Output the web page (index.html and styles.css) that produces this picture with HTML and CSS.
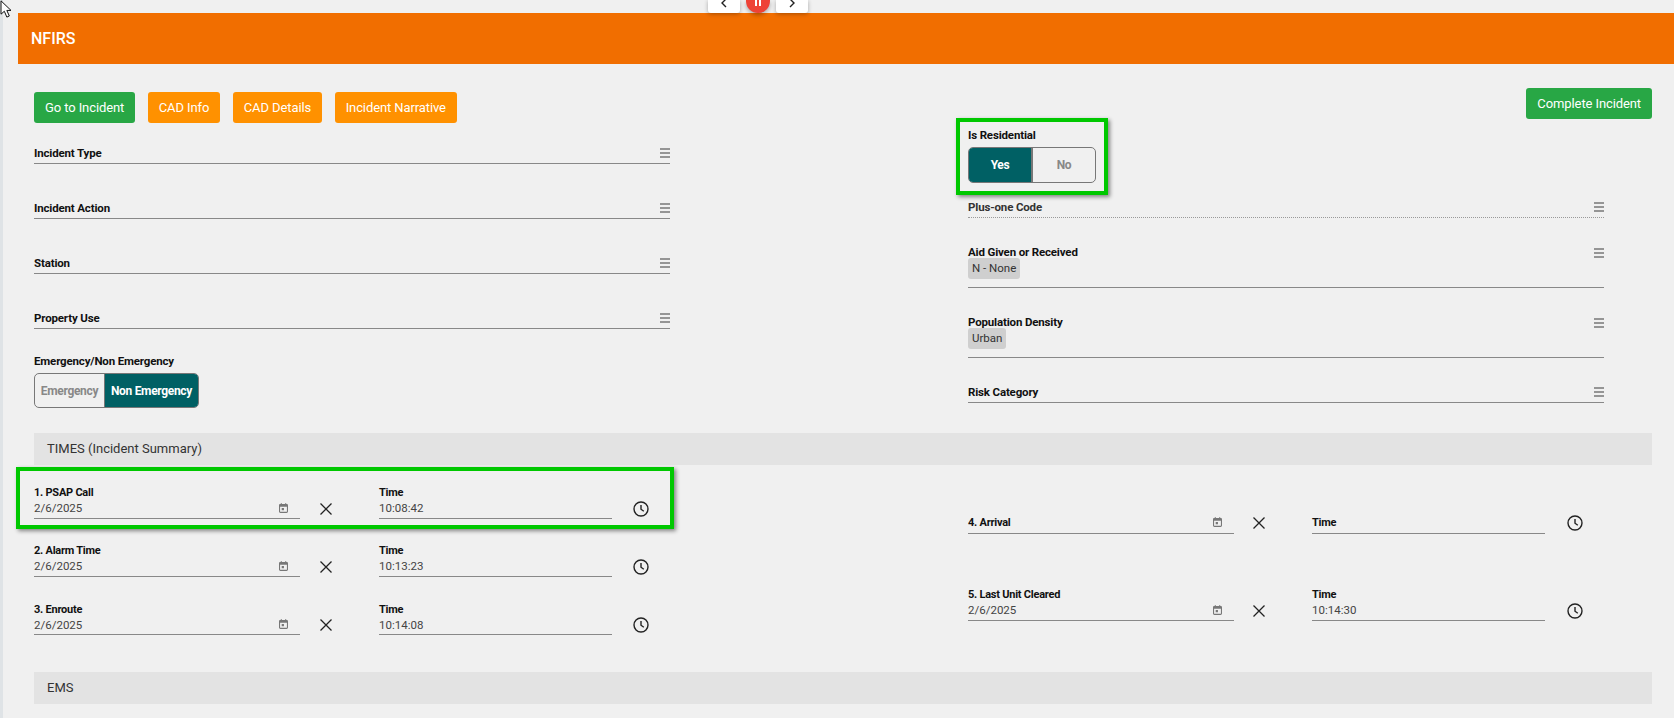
FILE: index.html
```html
<!DOCTYPE html>
<html lang="en">
<head>
<meta charset="utf-8">
<title>NFIRS</title>
<link rel="stylesheet" href="styles.css">
</head>
<body>
<svg class="cursor" width="12" height="20" viewBox="0 0 14 24"><path d="M1 1v16l4-3.500 3 7 3-1.300-3-6.700h5z" fill="#fff" stroke="#111" stroke-width="1.200"/></svg>
<div class="pager">
  <button class="pager-btn"><svg width="10" height="8" viewBox="0 0 10 8"><path d="M7-1 3 3l4 4" fill="none" stroke="#222" stroke-width="1.400"/></svg></button>
  <span class="pause"><i></i><i></i></span>
  <button class="pager-btn"><svg width="10" height="8" viewBox="0 0 10 8"><path d="M3-1l4 4-4 4" fill="none" stroke="#222" stroke-width="1.400"/></svg></button>
</div>
<div class="strip"></div>
<main class="main">
  <header class="title-bar">NFIRS</header>
  <div class="content">
    <div class="toolbar">
      <div class="btn-group">
        <a class="btn green">Go to Incident</a>
        <a class="btn orange">CAD Info</a>
        <a class="btn orange">CAD Details</a>
        <a class="btn orange">Incident Narrative</a>
      </div>
      <a class="btn green">Complete Incident</a>
    </div>
    <div class="columns top">
      <div class="col col-left">
        <div class="field f-type"><label>Incident Type</label><svg class="menu" viewBox="0 0 10 10"><path d="M0 1h10M0 5h10M0 9h10"/></svg></div>
        <div class="field f-gap"><label>Incident Action</label><svg class="menu" viewBox="0 0 10 10"><path d="M0 1h10M0 5h10M0 9h10"/></svg></div>
        <div class="field f-gap"><label>Station</label><svg class="menu" viewBox="0 0 10 10"><path d="M0 1h10M0 5h10M0 9h10"/></svg></div>
        <div class="field f-gap"><label>Property Use</label><svg class="menu" viewBox="0 0 10 10"><path d="M0 1h10M0 5h10M0 9h10"/></svg></div>
        <div class="toggle-field emergency">
          <label>Emergency/Non Emergency</label>
          <div class="toggle"><span class="opt em-w">Emergency</span><span class="opt on nem-w">Non Emergency</span></div>
        </div>
      </div>
      <div class="col col-right">
        <div class="toggle-field residential">
          <label>Is Residential</label>
          <div class="toggle"><span class="opt on yes-w">Yes</span><span class="opt no-w">No</span></div>
          <div class="hl hl-res"></div>
        </div>
        <div class="field dotted"><label>Plus-one Code</label><svg class="menu" viewBox="0 0 10 10"><path d="M0 1h10M0 5h10M0 9h10"/></svg></div>
        <div class="field tall"><div><label>Aid Given or Received</label><span class="chip">N - None</span></div><svg class="menu" viewBox="0 0 10 10"><path d="M0 1h10M0 5h10M0 9h10"/></svg></div>
        <div class="field tall"><div><label>Population Density</label><span class="chip">Urban</span></div><svg class="menu" viewBox="0 0 10 10"><path d="M0 1h10M0 5h10M0 9h10"/></svg></div>
        <div class="field f-risk"><label>Risk Category</label><svg class="menu" viewBox="0 0 10 10"><path d="M0 1h10M0 5h10M0 9h10"/></svg></div>
      </div>
    </div>
    <div class="section">TIMES (Incident Summary)</div>
    <div class="columns times">
      <div class="col col-left">
        <div class="time-row r1">
          <div class="dt"><label>1. PSAP Call</label><div class="val">2/6/2025</div><svg class="cal" viewBox="0 0 10 11"><path d="M2 0h1v1.500H2zM7 0h1v1.500H7z" fill="#777"/><rect x=".6" y="1.600" width="8.800" height="8.800" rx="1" fill="none" stroke="#777" stroke-width="1.200"/><rect x=".6" y="1.600" width="8.800" height="2.500" fill="#777"/><rect x="3" y="5.500" width="2.500" height="2.500" fill="#777"/></svg></div>
          <svg class="x" viewBox="0 0 12 12"><path d="M.5.500l11 11M11.500.500l-11 11"/></svg>
          <div class="tm"><label>Time</label><div class="val">10:08:42</div></div>
          <svg class="clock" viewBox="0 0 16 16"><circle cx="8" cy="8" r="7"/><path d="M8 4v4.200l2.800 2"/></svg>
          <div class="hl hl-time"></div>
        </div>
        <div class="time-row r2">
          <div class="dt"><label>2. Alarm Time</label><div class="val">2/6/2025</div><svg class="cal" viewBox="0 0 10 11"><path d="M2 0h1v1.500H2zM7 0h1v1.500H7z" fill="#777"/><rect x=".6" y="1.600" width="8.800" height="8.800" rx="1" fill="none" stroke="#777" stroke-width="1.200"/><rect x=".6" y="1.600" width="8.800" height="2.500" fill="#777"/><rect x="3" y="5.500" width="2.500" height="2.500" fill="#777"/></svg></div>
          <svg class="x" viewBox="0 0 12 12"><path d="M.5.500l11 11M11.500.500l-11 11"/></svg>
          <div class="tm"><label>Time</label><div class="val">10:13:23</div></div>
          <svg class="clock" viewBox="0 0 16 16"><circle cx="8" cy="8" r="7"/><path d="M8 4v4.200l2.800 2"/></svg>
        </div>
        <div class="time-row r3">
          <div class="dt"><label>3. Enroute</label><div class="val">2/6/2025</div><svg class="cal" viewBox="0 0 10 11"><path d="M2 0h1v1.500H2zM7 0h1v1.500H7z" fill="#777"/><rect x=".6" y="1.600" width="8.800" height="8.800" rx="1" fill="none" stroke="#777" stroke-width="1.200"/><rect x=".6" y="1.600" width="8.800" height="2.500" fill="#777"/><rect x="3" y="5.500" width="2.500" height="2.500" fill="#777"/></svg></div>
          <svg class="x" viewBox="0 0 12 12"><path d="M.5.500l11 11M11.500.500l-11 11"/></svg>
          <div class="tm"><label>Time</label><div class="val">10:14:08</div></div>
          <svg class="clock" viewBox="0 0 16 16"><circle cx="8" cy="8" r="7"/><path d="M8 4v4.200l2.800 2"/></svg>
        </div>
      </div>
      <div class="col col-right">
        <div class="time-row r4">
          <div class="dt"><label>4. Arrival</label><svg class="cal" viewBox="0 0 10 11"><path d="M2 0h1v1.500H2zM7 0h1v1.500H7z" fill="#777"/><rect x=".6" y="1.600" width="8.800" height="8.800" rx="1" fill="none" stroke="#777" stroke-width="1.200"/><rect x=".6" y="1.600" width="8.800" height="2.500" fill="#777"/><rect x="3" y="5.500" width="2.500" height="2.500" fill="#777"/></svg></div>
          <svg class="x" viewBox="0 0 12 12"><path d="M.5.500l11 11M11.500.500l-11 11"/></svg>
          <div class="tm"><label>Time</label></div>
          <svg class="clock" viewBox="0 0 16 16"><circle cx="8" cy="8" r="7"/><path d="M8 4v4.200l2.800 2"/></svg>
        </div>
        <div class="time-row r5">
          <div class="dt"><label>5. Last Unit Cleared</label><div class="val">2/6/2025</div><svg class="cal" viewBox="0 0 10 11"><path d="M2 0h1v1.500H2zM7 0h1v1.500H7z" fill="#777"/><rect x=".6" y="1.600" width="8.800" height="8.800" rx="1" fill="none" stroke="#777" stroke-width="1.200"/><rect x=".6" y="1.600" width="8.800" height="2.500" fill="#777"/><rect x="3" y="5.500" width="2.500" height="2.500" fill="#777"/></svg></div>
          <svg class="x" viewBox="0 0 12 12"><path d="M.5.500l11 11M11.500.500l-11 11"/></svg>
          <div class="tm"><label>Time</label><div class="val">10:14:30</div></div>
          <svg class="clock" viewBox="0 0 16 16"><circle cx="8" cy="8" r="7"/><path d="M8 4v4.200l2.800 2"/></svg>
        </div>
      </div>
    </div>
    <div class="section ems">EMS</div>
  </div>
</main>
</body>
</html>
```
FILE: styles.css
```css
* { box-sizing: border-box; }
html, body { margin: 0; height: 718px; overflow: hidden; }
body { display: flex; background: #f0f0f0; font-family: Roboto, "Liberation Sans", sans-serif; color: #222; position: relative; }
.strip { width: 3px; background: #dfe3e6; flex: none; }
.main { flex: 1; margin-left: 15px; padding-top: 13px; min-width: 0; }
.title-bar { height: 51px; background: #f16e00; color: #fff; font-size: 16px; font-weight: 500; padding-left: 13px; line-height: 52px; }
.content { padding: 28px 22px 0 16px; }
.toolbar { display: flex; justify-content: space-between; align-items: flex-start; height: 31px; }
.btn-group { display: flex; gap: 12.5px; }
.btn { display: block; height: 31px; line-height: 31px; padding: 0 11px; border-radius: 3px; color: #fff; font-size: 13px; letter-spacing: -.1px; white-space: nowrap; }
.btn.green { background: #28a745; }
.btn.orange { background: #ff9100; }
.toolbar > .btn { margin-top: -4px; }
.columns { display: grid; grid-template-columns: 934px 684px; }
.col { width: 636px; }
label { display: block; font-size: 11.5px; font-weight: 700; color: #111; line-height: 14px; letter-spacing: -.16px; }
.field { display: flex; justify-content: space-between; align-items: center; height: 22px; border-bottom: 1px solid #888; }
.f-type { margin-top: 19px; }
.f-gap { margin-top: 33px; }
.menu { width: 10px; height: 10px; flex: none; margin-top: 1px; stroke: #777; stroke-width: 1.500; }
.toggle-field { position: relative; }
.emergency { margin-top: 25px; }
.toggle { display: flex; margin-top: 5px; height: 35px; border: 1px solid #777; border-radius: 5px; overflow: hidden; width: max-content; }
.opt { display: flex; align-items: center; justify-content: center; font-size: 12px; font-weight: 700; color: #888; letter-spacing: -.32px; }
.opt.on { background: #006064; color: #fff; }
.em-w { width: 70px; border-right: 1px solid #777; }
.nem-w { width: 93px; }
.residential { margin-top: 5px; }
.residential .toggle { height: 36px; }
.yes-w { width: 64px; border-right: 2px solid #777; }
.no-w { width: 62px; }
.hl { position: absolute; border: 4px solid #00c800; box-shadow: 2px 2px 4px rgba(0,0,0,.45); pointer-events: none; }
.hl-res { left: -12px; top: -10px; width: 152px; height: 77px; }
.hl-time { left: -18px; top: -18px; width: 658px; height: 62px; }
.dotted { border-bottom: 1px dotted #999; margin-top: 13px; }
.dotted label { color: #333; }
.tall { align-items: flex-start; height: 43px; margin-top: 27px; }
.tall .menu { margin-top: 3px; }
.f-risk { margin-top: 23px; }
.chip { display: block; width: max-content; margin-top: -1px; height: 21px; line-height: 21px; padding: 0 4px; background: #cfcfcf; border-radius: 3px; font-size: 11.5px; color: #333; }
.section { height: 32px; line-height: 32px; padding-left: 13px; background: #e3e3e3; font-size: 13px; color: #333; margin-top: 25px; }
.time-row { position: relative; display: grid; grid-template-columns: 266px 79px 233px 58px; align-items: end; }
.time-row label { font-size: 11px; letter-spacing: -.24px; }
.dt, .tm { position: relative; height: 34px; padding-top: 1px; border-bottom: 1px solid #888; }
.val { font-size: 11.5px; line-height: 16px; color: #444; }
.cal { position: absolute; right: 12px; bottom: 5px; width: 9px; height: 10px; }
.x { width: 12px; height: 12px; stroke: #222; stroke-width: 1.300; margin: 0 0 4px 20px; fill: none; }
.clock { width: 16px; height: 16px; fill: none; stroke: #222; stroke-width: 1.400; margin: 0 0 2px 21px; }
.r1 { margin-top: 20px; }
.r2 { margin-top: 24px; }
.r3 { margin-top: 25px; }
.r3 .dt, .r3 .tm { height: 33px; }
.times .col-right { padding-top: 46px; }
.col-right .time-row { grid-template-columns: 266px 78px 233px 58px; }
.col-right .x { margin-left: 19px; }
.col-right .clock { margin-left: 22px; }
.r4 .dt, .r4 .tm { height: 23px; padding-top: 5px; }
.r4 .cal { bottom: 6px; }
.r4 .x { margin-bottom: 5px; }
.r4 .clock { margin-bottom: 3px; }
.r5 { margin-top: 53px; }
.ems { margin-top: 37px; }
.pager { position: absolute; left: 708px; top: 0; z-index: 3; display: flex; width: 100px; height: 13px; justify-content: space-between; }
.pager-btn { width: 32px; height: 13px; padding: 0; background: #fff; border: 0; border-radius: 0 0 3px 3px; box-shadow: 0 1px 4px rgba(0,0,0,.3); display: flex; justify-content: center; }
.pause { width: 24px; height: 13px; border-radius: 0 0 12px 12px; background: #ee4236; box-shadow: 0 2px 4px rgba(0,0,0,.3); display: flex; justify-content: center; gap: 2px; }
.pause i { width: 2px; height: 6px; background: #fff; }
.cursor { position: absolute; left: 0; top: 0; z-index: 4; }
```
